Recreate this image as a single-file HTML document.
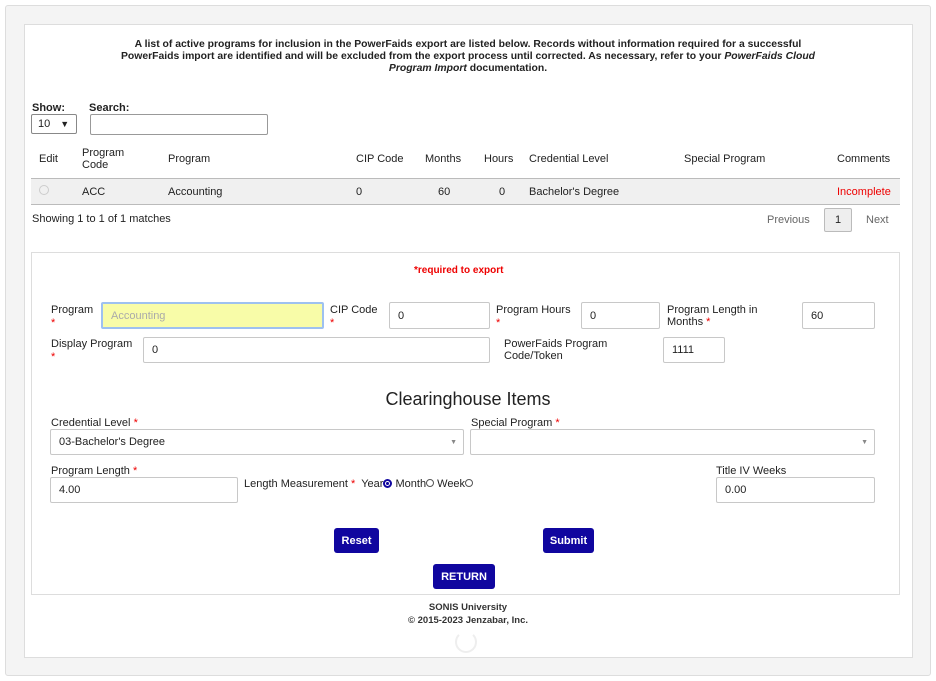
<!DOCTYPE html>
<html><head><meta charset="utf-8"><style>
*{box-sizing:border-box;margin:0;padding:0}
body{width:936px;height:681px;background:#fff;font-family:"Liberation Sans",Arial,sans-serif;font-size:11px;color:#222;position:relative;overflow:hidden}
.a{position:absolute}
.b{font-weight:bold}
.in{position:absolute;border:1px solid #c8c8c8;border-radius:2px;background:#fff;font-size:11px;padding-left:8px;display:flex;align-items:center}
.r{color:#e00}
.btn{position:absolute;background:#10069f;color:#fff;font-weight:bold;font-size:11px;border-radius:3px;display:flex;align-items:center;justify-content:center}
</style></head><body>
<div class="a" style="left:5px;top:5px;width:926px;height:671px;background:#f4f4f4;border:1px solid #ddd;border-radius:3px"></div>
<div class="a" style="left:24px;top:24px;width:889px;height:634px;background:#fff;border:1px solid #ddd"></div>

<div class="a b" style="left:110px;top:39px;width:716px;text-align:center;line-height:12px;font-size:10.4px">A list of active programs for inclusion in the PowerFaids export are listed below. Records without information required for a successful PowerFaids import are identified and will be excluded from the export process until corrected. As necessary, refer to your <i>PowerFaids Cloud Program Import</i> documentation.</div>

<div class="a b" style="left:32px;top:102px">Show:</div>
<div class="a b" style="left:89px;top:102px">Search:</div>
<div class="in" style="left:31px;top:114px;width:46px;height:20px;border-color:#888;padding-left:6px">10<span style="margin-left:10px;font-size:9px">&#9660;</span></div>
<div class="in" style="left:90px;top:114px;width:178px;height:21px;border-color:#999"></div>

<div class="a" style="left:39px;top:153px">Edit</div>
<div class="a" style="left:82px;top:147px;line-height:12px">Program<br>Code</div>
<div class="a" style="left:168px;top:153px">Program</div>
<div class="a" style="left:356px;top:153px">CIP Code</div>
<div class="a" style="left:425px;top:153px">Months</div>
<div class="a" style="left:484px;top:153px">Hours</div>
<div class="a" style="left:529px;top:153px">Credential Level</div>
<div class="a" style="left:684px;top:153px">Special Program</div>
<div class="a" style="left:837px;top:153px">Comments</div>
<div class="a" style="left:31px;top:178px;width:869px;height:27px;background:#f0f0f0;border-top:1px solid #bbb;border-bottom:1px solid #bbb"></div>
<div class="a" style="left:39px;top:185px;width:10px;height:10px;border:1px solid #ccc;border-radius:50%"></div>
<div class="a" style="left:82px;top:186px">ACC</div>
<div class="a" style="left:168px;top:186px">Accounting</div>
<div class="a" style="left:356px;top:186px">0</div>
<div class="a" style="left:438px;top:186px">60</div>
<div class="a" style="left:499px;top:186px">0</div>
<div class="a" style="left:529px;top:186px">Bachelor's Degree</div>
<div class="a" style="left:837px;top:186px;color:#e00">Incomplete</div>

<div class="a" style="left:32px;top:213px">Showing 1 to 1 of 1 matches</div>
<div class="a" style="left:767px;top:214px;color:#666">Previous</div>
<div class="a" style="left:824px;top:208px;width:28px;height:24px;border:1px solid #bbb;background:#eee;border-radius:2px;text-align:center;line-height:22px">1</div>
<div class="a" style="left:866px;top:214px;color:#666">Next</div>

<div class="a" style="left:31px;top:252px;width:869px;height:343px;border:1px solid #ddd"></div>
<div class="a b" style="left:414px;top:265px;font-size:10px;color:#e00">*required to export</div>

<div class="a" style="left:51px;top:304px;line-height:13px">Program<br><span class="r">*</span></div>
<div class="in" style="left:101px;top:302px;width:223px;height:27px;background:#f8fca8;border:2px solid #9ec1f0;color:#aaa">Accounting</div>
<div class="a" style="left:330px;top:304px;line-height:13px">CIP Code<br><span class="r">*</span></div>
<div class="in" style="left:389px;top:302px;width:101px;height:27px">0</div>
<div class="a" style="left:496px;top:304px;line-height:13px">Program Hours<br><span class="r">*</span></div>
<div class="in" style="left:581px;top:302px;width:79px;height:27px">0</div>
<div class="a" style="left:667px;top:304px;line-height:12px">Program Length in<br>Months <span class="r">*</span></div>
<div class="in" style="left:802px;top:302px;width:73px;height:27px">60</div>

<div class="a" style="left:51px;top:338px;line-height:13px">Display Program<br><span class="r">*</span></div>
<div class="in" style="left:143px;top:337px;width:347px;height:26px">0</div>
<div class="a" style="left:504px;top:338px;line-height:12px">PowerFaids Program<br>Code/Token</div>
<div class="in" style="left:663px;top:337px;width:62px;height:26px">1111</div>

<div class="a" style="left:300px;top:389px;width:336px;text-align:center;font-size:18px;color:#222">Clearinghouse Items</div>

<div class="a" style="left:51px;top:417px">Credential Level <span class="r">*</span></div>
<div class="in" style="left:50px;top:429px;width:414px;height:26px">03-Bachelor's Degree<span style="position:absolute;right:6px;font-size:7px;color:#888">&#9660;</span></div>
<div class="a" style="left:471px;top:417px">Special Program <span class="r">*</span></div>
<div class="in" style="left:470px;top:429px;width:405px;height:26px"><span style="position:absolute;right:6px;font-size:7px;color:#888">&#9660;</span></div>

<div class="a" style="left:51px;top:465px">Program Length <span class="r">*</span></div>
<div class="in" style="left:50px;top:477px;width:188px;height:26px">4.00</div>
<div class="a" style="left:244px;top:478px">Length Measurement <span class="r">*</span>&nbsp; Year<span style="display:inline-block;width:9px;height:9px;border:2px solid #10069f;border-radius:50%;background:radial-gradient(#10069f 40%,#fff 45%);vertical-align:-1px"></span> Month<span style="display:inline-block;width:8px;height:8px;border:1px solid #555;border-radius:50%;vertical-align:0"></span> Week<span style="display:inline-block;width:8px;height:8px;border:1px solid #555;border-radius:50%;vertical-align:0"></span></div>
<div class="a" style="left:716px;top:465px">Title IV Weeks</div>
<div class="in" style="left:716px;top:477px;width:159px;height:26px">0.00</div>

<div class="btn" style="left:334px;top:528px;width:45px;height:25px">Reset</div>
<div class="btn" style="left:543px;top:528px;width:51px;height:25px">Submit</div>
<div class="btn" style="left:433px;top:564px;width:62px;height:25px">RETURN</div>

<div class="a b" style="left:300px;top:601px;width:336px;text-align:center;font-size:9.5px;line-height:13px;color:#333">SONIS University<br>© 2015-2023 Jenzabar, Inc.</div>
<div class="a" style="left:455px;top:631px;width:22px;height:22px;border:2px solid #eee;border-top-color:#fff;border-radius:50%"></div>
</body></html>
